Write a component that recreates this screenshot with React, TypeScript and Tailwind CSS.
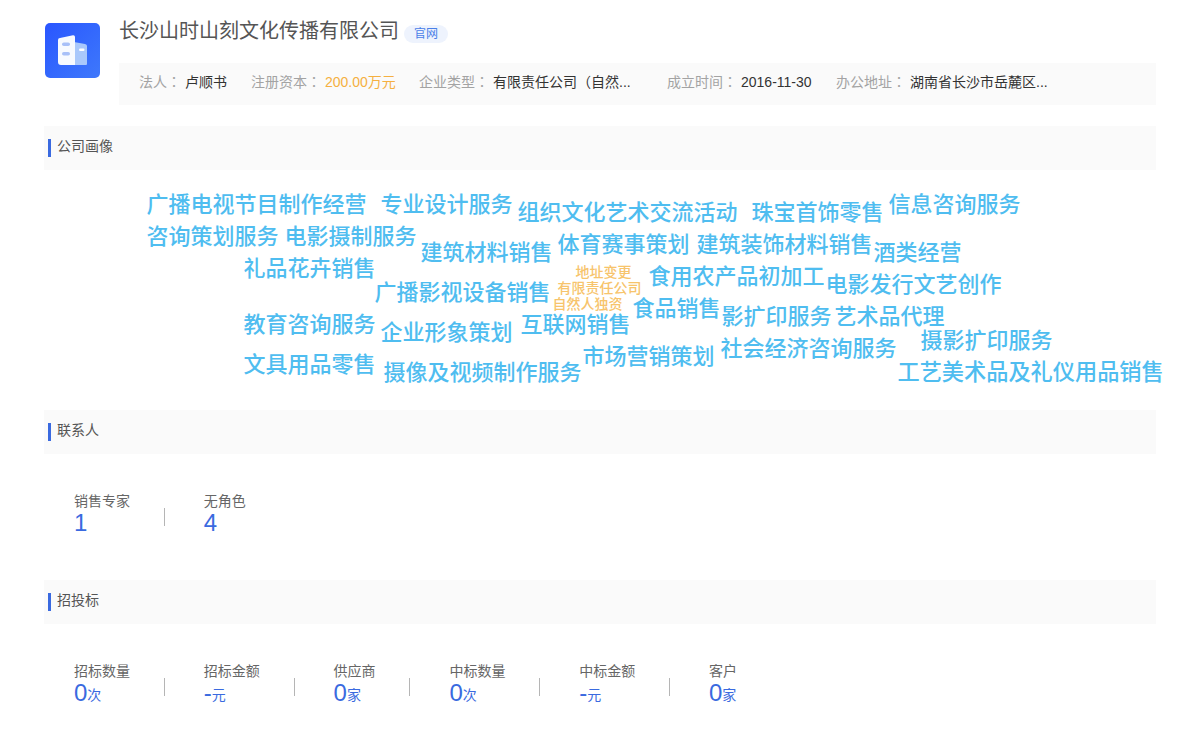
const F = "font-['Liberation_Sans','Noto_Sans_CJK_SC',sans-serif]";

type W = [string, number, number, number?];
const words: W[] = [
  ["广播电视节目制作经营", 147, 204],
  ["专业设计服务", 381, 204],
  ["组织文化艺术交流活动", 518, 212],
  ["珠宝首饰零售", 752, 212],
  ["信息咨询服务", 889, 204],
  ["咨询策划服务", 147, 236],
  ["电影摄制服务", 285, 236],
  ["建筑材料销售", 421, 252],
  ["体育赛事策划", 558, 244],
  ["建筑装饰材料销售", 697, 244],
  ["酒类经营", 874, 252],
  ["礼品花卉销售", 244, 268],
  ["地址变更", 576, 271, 14],
  ["有限责任公司", 558, 287, 14],
  ["自然人独资", 553, 303, 14],
  ["食用农产品初加工", 649, 276],
  ["电影发行文艺创作", 826, 284],
  ["广播影视设备销售", 375, 292],
  ["食品销售", 633, 308],
  ["影扩印服务", 722, 316],
  ["艺术品代理", 835, 316],
  ["教育咨询服务", 244, 324],
  ["企业形象策划", 381, 332],
  ["互联网销售", 521, 324],
  ["摄影扩印服务", 921, 340],
  ["社会经济咨询服务", 721, 348],
  ["市场营销策划", 583, 356],
  ["文具用品零售", 244, 364],
  ["摄像及视频制作服务", 384, 372],
  ["工艺美术品及礼仪用品销售", 898, 372, 22.2],
];

function SectionBar({ title }: { title: string }) {
  return (
    <div className="flex h-[44px] items-center bg-[#fafafa] pl-[4px]">
      <div className="h-[18px] w-[3px] bg-[#3a6ae0]" />
      <div className="ml-[6px] -mt-[4px] text-[14px] leading-[20px] text-[#555]">{title}</div>
    </div>
  );
}

function Stats({ items }: { items: [string, string, string?][] }) {
  return (
    <div className="flex items-end pl-[30px]">
      {items.map(([label, value, unit], i) => (
        <div key={label} className="flex items-end">
          {i > 0 && <div className="mb-[9px] mr-[39px] h-[18px] w-px bg-[#b5b5b5]" />}
          <div className="pr-[33.8px]">
            <div className="text-[14px] leading-[20px] text-[#666]">{label}</div>
            <div className="flex h-[24px] items-end leading-[24px] text-[#3a6ae0]">
              <span className="text-[24px]">{value}</span>
              {unit && <span className="text-[14px] leading-[20px]">{unit}</span>}
            </div>
          </div>
        </div>
      ))}
    </div>
  );
}

function Info({ label, value, cls, vc }: { label: string; value: string; cls: string; vc?: string }) {
  return (
    <div className={`flex items-center ${cls}`}>
      <span className="text-[#a3a3a3]">
        {label}
        <span className="font-['Noto_Sans_CJK_TC',sans-serif]">：</span>
      </span>
      <span className={`ml-[4px] ${vc ?? "text-[#333]"}`}>{value}</span>
    </div>
  );
}

export default function App() {
  return (
    <div className={`${F} relative h-[752px] w-[1200px] overflow-hidden bg-white px-[44px]`}>
      <div className="flex pt-[18px]">
        <div className="ml-px mt-[5px] h-[55px] w-[55px] shrink-0 rounded-[5px] bg-gradient-to-br from-[#2a55ff] to-[#3f78fb]">
          <svg viewBox="0 0 55 55" className="h-[55px] w-[55px]">
            <path d="M29 19 L40 21 Q42 21.5 42 23 L42 41 Q42 42 41 42 L29 42Z" fill="#a9c8fb" />
            <path d="M13 17 Q13 15 15 15 L28 12.2 Q30 12 30 14 L30 42 L16 42 Q13 42 13 39Z" fill="#f7faff" />
            <rect x="17" y="19.5" width="8" height="3.5" rx="1.75" fill="#a8c0f8" />
            <rect x="17" y="29" width="8" height="3.5" rx="1.75" fill="#a8c0f8" />
            <rect x="34" y="25.5" width="5.5" height="2.5" rx="1.25" fill="#fff" />
          </svg>
        </div>
        <div className="ml-[19px] flex-1">
          <div className="flex h-[26px] items-center">
            <span className="text-[20px] leading-[26px] text-[#555]">长沙山时山刻文化传播有限公司</span>
            <span className="ml-[5px] mt-[6px] flex h-[18px] w-[44px] items-center justify-center rounded-[9px] bg-[#eef3fd] text-[12px] text-[#4a80e8]">官网</span>
          </div>
          <div className="mt-[19px] flex h-[42px] items-center bg-[#fafafa] pb-[4px] pl-[20px] text-[14px]">
            <Info label="法人" value="卢顺书" cls="w-[112px]" />
            <Info label="注册资本" value="200.00万元" cls="w-[168px]" vc="text-[#f5b041]" />
            <Info label="企业类型" value="有限责任公司（自然..." cls="w-[248px]" />
            <Info label="成立时间" value="2016-11-30" cls="w-[169px]" />
            <Info label="办公地址" value="湖南省长沙市岳麓区..." cls="" />
          </div>
        </div>
      </div>
      <div className="mt-[21px]"><SectionBar title="公司画像" /></div>
      <div className="relative h-[240px]">
        {words.map(([t, x, cy, s]) => (
          <span
            key={t}
            className={`absolute whitespace-nowrap font-medium leading-none ${s === 14 ? "text-[#f7c46c]" : "text-[#4fbdf0]"}`}
            style={{ left: x - 44.5, top: cy - 169 - (s ?? 22) / 2, fontSize: s ?? 22 }}
          >
            {t}
          </span>
        ))}
      </div>
      <SectionBar title="联系人" />
      <div className="h-[126px] pt-[37px]">
        <Stats items={[["销售专家", "1"], ["无角色", "4"]]} />
      </div>
      <SectionBar title="招投标" />
      <div className="pt-[37px]">
        <Stats
          items={[
            ["招标数量", "0", "次"],
            ["招标金额", "-", "元"],
            ["供应商", "0", "家"],
            ["中标数量", "0", "次"],
            ["中标金额", "-", "元"],
            ["客户", "0", "家"],
          ]}
        />
      </div>
    </div>
  );
}
